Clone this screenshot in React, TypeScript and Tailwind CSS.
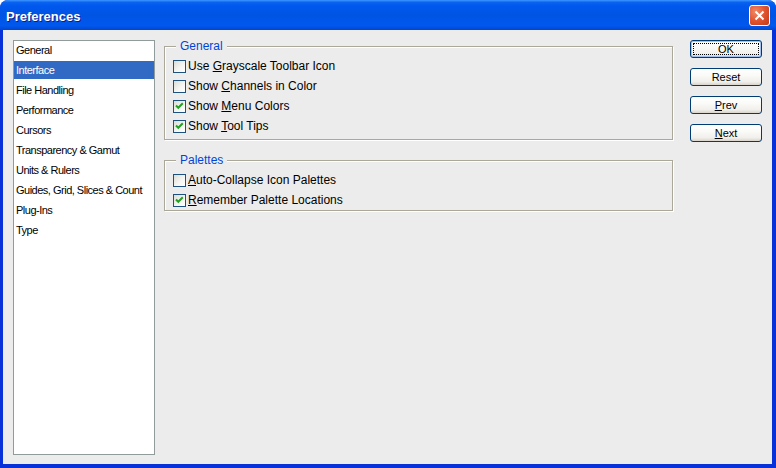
import React from "react";

const font = "font-['Liberation_Sans',Arial,sans-serif]";

const sections = [
  "General",
  "Interface",
  "File Handling",
  "Performance",
  "Cursors",
  "Transparency & Gamut",
  "Units & Rulers",
  "Guides, Grid, Slices & Count",
  "Plug-Ins",
  "Type",
];

function Check({ checked }: { checked: boolean }) {
  return (
    <span className="w-[13px] h-[13px] shrink-0 border border-[#1c5180] bg-[linear-gradient(135deg,#dcdcd7_0%,#f6f6f3_60%,#ffffff_100%)] flex items-center justify-center">
      {checked && (
        <svg width="11" height="11" viewBox="0 0 11 11">
          <path d="M2 4.5 L4.3 6.8 L8.8 2.3" fill="none" stroke="#21a121" strokeWidth="2" />
        </svg>
      )}
    </span>
  );
}

// label with mnemonic letter underlined
function Option({ checked, pre, key1, post }: { checked: boolean; pre: string; key1: string; post: string }) {
  return (
    <div className="h-5 flex items-center gap-[2px]">
      <Check checked={checked} />
      <span className="text-[12px] text-black whitespace-pre">
        {pre}
        <span className="underline underline-offset-1">{key1}</span>
        {post}
      </span>
    </div>
  );
}

function Group({ title, children, className }: { title: string; children: React.ReactNode; className?: string }) {
  return (
    <div className={`relative border border-[#aca899] shadow-[1px_1px_0_#ffffff,inset_1px_1px_0_#ffffff] pl-2 pt-[9px] ${className ?? ""}`}>
      {/* legend sits over the etched border */}
      <span className="absolute left-[11px] -top-[9px] px-[4px] bg-[#ececec] text-[12px] leading-[16px] text-[#0046d5]">
        {title}
      </span>
      {children}
    </div>
  );
}

function Btn({ children, def }: { children: React.ReactNode; def?: boolean }) {
  return (
    <div
      className={`h-[18px] w-[72px] rounded-[3px] border border-[#003c74] bg-[linear-gradient(180deg,#ffffff_0%,#fafaf8_40%,#f0efeb_80%,#d9d4ca_100%)] flex items-center justify-center text-[11px] text-black ${
        def ? "shadow-[inset_0_0_0_1px_#a4c2ef]" : ""
      }`}
    >
      {def ? (
        <span className="w-[66px] h-[12px] border border-dotted border-black flex items-center justify-center leading-none">
          {children}
        </span>
      ) : (
        children
      )}
    </div>
  );
}

export default function App() {
  return (
    <div className={`w-[776px] h-[468px] flex flex-col bg-[#0831d9] rounded-t-[8px] overflow-hidden ${font}`}>
      {/* title bar */}
      <div className="h-[30px] shrink-0 flex items-center pl-[6px] pr-[6px] bg-[linear-gradient(180deg,#3d95ff_0%,#0a62f0_8%,#0058ee_20%,#0054e3_50%,#0058ee_85%,#0046d0_100%)]">
        <span className="mt-[3px] text-[13px] font-bold text-white [text-shadow:1px_1px_0_#0a1e8a]">Preferences</span>
        <div className="flex-1" />
        <div className="mt-px w-[21px] h-[21px] rounded-[3px] border border-white bg-[radial-gradient(circle_at_30%_30%,#f08a6a_0%,#e0532f_50%,#c13a16_100%)] flex items-center justify-center">
          <svg width="11" height="11" viewBox="0 0 11 11">
            <path d="M1.5 1.5 L9.5 9.5 M9.5 1.5 L1.5 9.5" stroke="#ffffff" strokeWidth="2" />
          </svg>
        </div>
      </div>

      {/* client area */}
      <div className="flex-1 ml-[3px] mr-[4px] mb-[4px] bg-[#ececec] flex pl-[10px] pt-[10px] pb-[9px]">
        <div className="w-[142px] h-full border border-[#919b9c] bg-white flex flex-col gap-[2px]">
          {sections.map((s, i) => (
            <div
              key={s}
              className={`h-[18px] shrink-0 flex items-center pl-[2px] text-[11px] tracking-[-0.5px] whitespace-nowrap ${
                i === 1 ? "bg-[#316ac5] text-white" : "text-black"
              }`}
            >
              {s}
            </div>
          ))}
        </div>

        <div className="w-[509px] ml-[9px] mt-[6px] flex flex-col">
          <Group title="General" className="pb-[3px]">
            <Option checked={false} pre="Use " key1="G" post="rayscale Toolbar Icon" />
            <Option checked={false} pre="Show " key1="C" post="hannels in Color" />
            <Option checked={true} pre="Show " key1="M" post="enu Colors" />
            <Option checked={true} pre="Show " key1="T" post="ool Tips" />
          </Group>
          <Group title="Palettes" className="mt-[20px]">
            <Option checked={false} pre="" key1="A" post="uto-Collapse Icon Palettes" />
            <Option checked={true} pre="" key1="R" post="emember Palette Locations" />
          </Group>
        </div>

        <div className="ml-[17px] flex flex-col gap-[10px]">
          <Btn def>OK</Btn>
          <Btn>Reset</Btn>
          <Btn>
            <span className="underline underline-offset-1">P</span>rev
          </Btn>
          <Btn>
            <span className="underline underline-offset-1">N</span>ext
          </Btn>
        </div>
      </div>
    </div>
  );
}
